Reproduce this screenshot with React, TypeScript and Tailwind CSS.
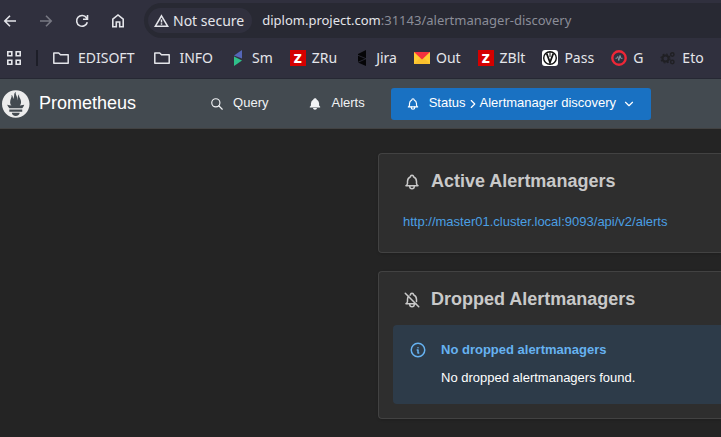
import type { ReactNode } from "react";
import {
  TbBell,
  TbBellFilled,
  TbBellOff,
  TbChevronDown,
  TbChevronRight,
  TbInfoCircle,
  TbSearch,
} from "react-icons/tb";

function Stroke({ d, className, size = 16 }: { d: string; className?: string; size?: number }) {
  return (
    <svg
      width={size}
      height={size}
      viewBox="0 0 16 16"
      fill="none"
      stroke="currentColor"
      strokeWidth="1.6"
      className={className}
      aria-hidden="true"
    >
      <path d={d} />
    </svg>
  );
}

function FolderIcon() {
  return (
    <svg width="22" height="16" viewBox="0 0 22 16" fill="none" stroke="#e4e5ea" strokeWidth="1.5" strokeLinejoin="round" aria-hidden="true">
      <path d="M3.800 3h4.900l1.800 1.700h7.700v8.500H3.800z" />
    </svg>
  );
}

function SmIcon() {
  return (
    <svg width="16" height="16" viewBox="0 0 16 16" aria-hidden="true">
      <path d="M4 5.500 12 0v8.500z" fill="#5566b8" />
      <path d="M4 6.500 12 10.500 4 16z" fill="#2fc08a" />
    </svg>
  );
}

function JiraIcon() {
  return (
    <svg width="16" height="16" viewBox="0 0 16 16" aria-hidden="true">
      <path d="M4 4 12 0v16l-8-3.500z" fill="#050507" />
      <path d="M4 5.300 12 8.700 4 12.300" fill="none" stroke="#30303e" strokeWidth=".8" />
    </svg>
  );
}

function ZIcon() {
  return (
    <span className="flex size-4 items-center justify-center bg-[#d40000] font-['Open_Sans',sans-serif] text-[13px] leading-4 font-extrabold text-white">
      Z
    </span>
  );
}

function MailIcon() {
  return (
    <svg width="16" height="16" viewBox="0 0 16 16" aria-hidden="true">
      <path d="M0 2h16v12H0z" fill="#ffcc33" />
      <path d="M0 14 6 8h4l6 6z" fill="#fbc02d" />
      <path d="M0 2h16L8 9.500z" fill="#f5333f" />
    </svg>
  );
}

function PassIcon() {
  return (
    <svg width="16" height="16" viewBox="0 0 16 16" aria-hidden="true">
      <rect width="16" height="16" rx="3" fill="#fff" />
      <circle cx="8" cy="8" r="6.300" fill="#fff" stroke="#111" strokeWidth="1.400" />
      <path d="M4.700 3.500 8 12.500l3.300-9" fill="none" stroke="#111" strokeWidth="1.800" />
      <path d="M8 2v5" stroke="#111" strokeWidth="1" />
    </svg>
  );
}

function PulseIcon() {
  return (
    <svg width="16" height="16" viewBox="0 0 16 16" aria-hidden="true">
      <circle cx="8" cy="8" r="6.700" fill="#30303e" stroke="#ee2737" strokeWidth="2.400" />
      <path d="M4.500 8.300h1.200L6.800 6.500l1 4 1.200-5 .8 2.800h1.700" fill="none" stroke="#8fa3ad" strokeWidth=".9" />
    </svg>
  );
}

function GearsIcon() {
  return (
    <svg width="16" height="16" viewBox="0 0 16 16" fill="none" stroke="#202024" aria-hidden="true">
      <circle cx="5.500" cy="8.500" r="3" strokeWidth="2" />
      <circle cx="5.500" cy="8.500" r="4.500" strokeWidth="1.200" strokeDasharray="1.800 1.734" />
      <circle cx="12.300" cy="4.500" r="1.700" strokeWidth="1.500" />
      <circle cx="12.300" cy="12" r="1.700" strokeWidth="1.500" />
    </svg>
  );
}

function PrometheusLogo() {
  return (
    <svg width="28" height="28" viewBox="0 0 115.333 114" fill="#ececec" aria-hidden="true">
      <path d="M56.667.667C25.372.667 0 26.036 0 57.332c0 31.295 25.372 56.666 56.667 56.666s56.666-25.371 56.666-56.666c0-31.296-25.372-56.665-56.666-56.665zm0 106.055c-8.904 0-16.123-5.948-16.123-13.283H72.790c0 7.334-7.219 13.283-16.123 13.283zM83.297 89.040H30.034v-9.658h53.264v9.658h-.001zm-.191-14.629H30.186c-.176-.203-.356-.403-.526-.609-5.452-6.620-6.736-10.076-7.983-13.598-.021-.116 6.611 1.355 11.314 2.413 0 0 2.420.56 5.958 1.205-3.397-3.982-5.414-9.044-5.414-14.218 0-11.359 8.712-21.285 5.569-29.308 3.059.249 6.331 6.456 6.552 16.161 3.252-4.494 4.613-12.701 4.613-17.733 0-5.210 3.433-11.262 6.867-11.469-3.061 5.045.793 9.370 4.219 20.099 1.285 4.030 1.121 10.812 2.113 15.113.33-8.933 1.866-21.966 7.538-26.466-2.502 5.672.37 12.769 2.334 16.180 3.169 5.504 5.090 9.674 5.090 17.560 0 5.287-1.952 10.265-5.245 14.134 3.744-.702 6.330-1.336 6.330-1.336l12.162-2.373c.001-.001-1.766 7.269-8.572 14.245z" />
    </svg>
  );
}

function Bookmark({ icon, label }: { icon: ReactNode; label: string }) {
  return (
    <a href="#" className="flex items-center gap-1.5">
      {icon}
      {label}
    </a>
  );
}

function BrowserChrome() {
  return (
    <div className="h-[79px] overflow-hidden border-b border-[#262833] bg-[#30303e] pt-[3px] font-['Noto_Sans',sans-serif] text-[#e4e5ea]">
      <div className="flex h-[35px] items-center">
        <div className="flex w-36 shrink-0 items-center gap-5 pl-0.5">
          <button aria-label="Back">
            <Stroke d="M14 8H3M8 2.800 2.800 8 8 13.200" />
          </button>
          <button aria-label="Forward" className="text-[#777883]">
            <Stroke d="M2 8h11M8 2.800 13.200 8 8 13.200" />
          </button>
          <button aria-label="Reload">
            <Stroke d="M13.300 9.200A5.400 5.400 0 1 1 12.500 4.800L13.500 6M13.500 2v4.300H9" />
          </button>
          <button aria-label="Home">
            <Stroke d="M2.800 6.200 8 2l5.200 4.200v7.500h-3.500V9H6.300v4.700H2.800z" />
          </button>
        </div>
        <div className="flex h-[35px] min-w-0 flex-1 items-center rounded-l-full bg-[#282933] pl-1">
          <button className="flex h-[25px] shrink-0 items-center gap-1 rounded-full bg-[#30303e] pr-2 pl-1.5 text-sm">
            <svg width="15" height="14" viewBox="0 0 15 14" fill="none" stroke="currentColor" strokeWidth="1.500" aria-hidden="true">
              <path d="M7.500 1.800 13.700 12.300H1.300zM7.500 5.500v3M7.500 9.300v1.400" />
            </svg>
            Not secure
          </button>
          <div className="ml-2.5 text-[13px] whitespace-nowrap text-[#8b8d98]">
            <span className="text-[#e4e5ea]">diplom.project.com</span>:31143/alertmanager-discovery
          </div>
        </div>
      </div>
      <nav className="flex h-10 items-center text-sm whitespace-nowrap" aria-label="Bookmarks">
        <button aria-label="Apps" className="ml-1.5">
          <svg width="16" height="16" viewBox="0 0 16 16" fill="none" stroke="currentColor" strokeWidth="1.600" aria-hidden="true">
            <path d="M1.800 1.800h4v4h-4zM10.200 1.800h4v4h-4zM1.800 10.200h4v4h-4zM10.200 10.200h4v4h-4z" />
          </svg>
        </button>
        <span className="mr-3 ml-3.5 h-4 w-0.5 bg-[#1d1e28]" />
        <div className="flex gap-[17px]">
          <Bookmark icon={<FolderIcon />} label="EDISOFT" />
          <Bookmark icon={<FolderIcon />} label="INFO" />
          <Bookmark icon={<SmIcon />} label="Sm" />
          <Bookmark icon={<ZIcon />} label="ZRu" />
          <Bookmark icon={<JiraIcon />} label="Jira" />
          <Bookmark icon={<MailIcon />} label="Out" />
          <Bookmark icon={<ZIcon />} label="ZBlt" />
          <Bookmark icon={<PassIcon />} label="Pass" />
          <Bookmark icon={<PulseIcon />} label="G" />
          <Bookmark icon={<GearsIcon />} label="Eto" />
        </div>
      </nav>
    </div>
  );
}

function AppHeader() {
  return (
    <header className="flex h-[50px] items-center border-b border-[#424242] bg-[#434a50] pl-0.5 whitespace-nowrap">
      <a href="#" className="flex items-center gap-[9px] text-lg leading-7 text-white">
        <PrometheusLogo />
        <span className="pb-0.5">Prometheus</span>
      </a>
      <nav className="ml-[62px] flex items-center text-[13px] leading-5 text-[#f1f3f5]">
        <a href="#" className="flex h-8 items-center gap-[9px] px-3">
          <TbSearch size={14} />
          <span className="pb-0.5">Query</span>
        </a>
        <a href="#" className="ml-4 flex h-8 items-center gap-[9px] px-3">
          <TbBellFilled size={14} />
          <span className="pb-0.5">Alerts</span>
        </a>
        <button className="ml-3.5 flex h-8 w-[260px] items-center rounded-[3px] bg-[#1971c2] px-[15px] text-white">
          <TbBell size={14} />
          <span className="ml-[9px] pb-0.5">Status</span>
          <TbChevronRight size={14} />
          <span className="pb-0.5">Alertmanager discovery</span>
          <TbChevronDown size={14} className="ml-auto" />
        </button>
      </nav>
    </header>
  );
}

function Card({ icon, title, children }: { icon: ReactNode; title: string; children: ReactNode }) {
  return (
    <section className="rounded-l border border-r-0 border-[#424242] bg-[#2e2e2e] pt-3.5 pb-3.5 pl-3.5 shadow-sm">
      <h2 className="flex h-[27px] items-center gap-2.5 pl-2.5 text-lg leading-6 font-bold">
        {icon}
        <span className="pb-0.5">{title}</span>
      </h2>
      {children}
    </section>
  );
}

export default function App() {
  return (
    <div className="min-h-screen overflow-hidden bg-[#242424] font-['Liberation_Sans',Arial,sans-serif] text-[#c9c9c9]">
      <BrowserChrome />
      <AppHeader />
      <main className="flex flex-col gap-[18px] pt-6 pl-[378px]">
        <Card icon={<TbBell size={18} />} title="Active Alertmanagers">
          <div className="px-2.5 pt-[17px] pb-1.5 text-[13px] leading-5">
            <a href="#" className="text-[#4a9fe3]">
              http://master01.cluster.local:9093/api/v2/alerts
            </a>
          </div>
        </Card>
        <Card icon={<TbBellOff size={18} />} title="Dropped Alertmanagers">
          <div className="mt-3 flex gap-3.5 rounded-l bg-[#2d3b49] px-4 pt-[15px] pb-4 text-[13px] leading-5">
            <TbInfoCircle size={18} className="mt-px text-[#66b2f1]" />
            <div className="flex flex-col gap-2">
              <strong className="text-[#66b2f1]">No dropped alertmanagers</strong>
              <p className="text-white">No dropped alertmanagers found.</p>
            </div>
          </div>
        </Card>
      </main>
    </div>
  );
}
